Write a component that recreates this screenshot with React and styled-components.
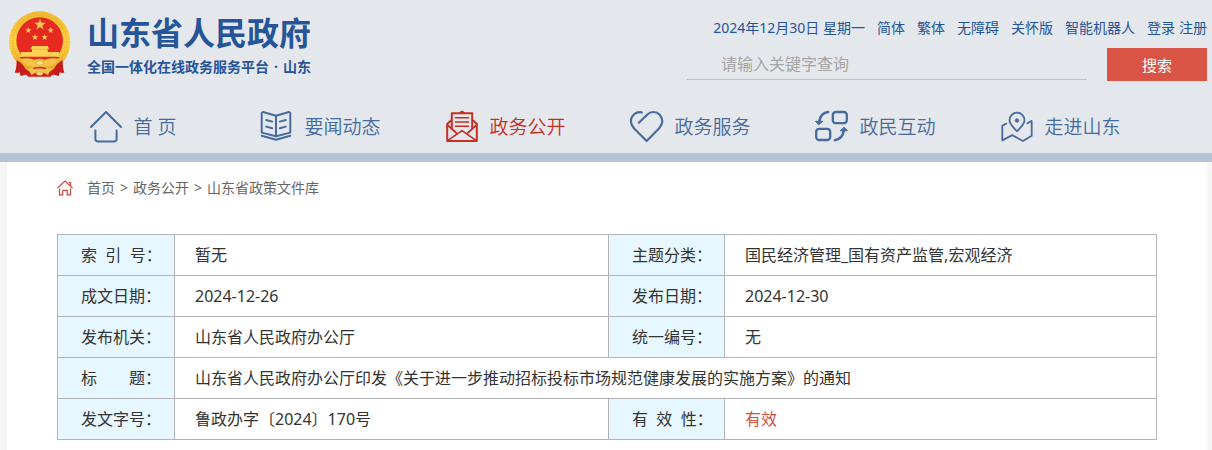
import React from 'react'
import styled, { createGlobalStyle } from 'styled-components';

const topLinks = ['简体', '繁体', '无障碍', '关怀版', '智能机器人'];

const crumbs = ['首页', '政务公开', '山东省政策文件库'];

const starPoints = (cx, cy, r) =>
  Array.from({ length: 10 }, (_, i) => {
    const radius = i % 2 ? r * 0.4 : r;
    const angle = (Math.PI / 5) * i - Math.PI / 2;
    return `${(cx + radius * Math.cos(angle)).toFixed(1)},${(cy + radius * Math.sin(angle)).toFixed(1)}`;
  }).join(' ');

const Emblem = () => (
  <svg width="63" height="67" viewBox="24 19 189 201" aria-hidden="true">
    <defs>
      <linearGradient id="gold" x1="0" y1="0" x2="0" y2="1">
        <stop offset="0" stopColor="#f0b92f" />
        <stop offset="0.5" stopColor="#fbd03f" />
        <stop offset="1" stopColor="#e9a72a" />
      </linearGradient>
    </defs>
    <path d="M52 164 Q60 192 48 206 L60 203 L62 214 Q80 204 84 216 L152 216 Q158 204 176 214 L179 203 L190 206 Q180 188 188 164 Z" fill="#cf1f1c" />
    <circle cx="119" cy="112" r="92" fill="url(#gold)" />
    <circle cx="119" cy="112" r="81" fill="none" stroke="#dd9c22" strokeWidth="6" strokeDasharray="3 5" opacity="0.45" />
    <circle cx="119" cy="108" r="70" fill="#e62a22" />
    <polygon points={starPoints(120, 60, 18)} fill="#f8cc55" />
    <polygon points={starPoints(85, 77, 10)} fill="#f8cc55" />
    <polygon points={starPoints(152, 77, 10)} fill="#f8cc55" />
    <polygon points={starPoints(105, 98, 10)} fill="#f8cc55" />
    <polygon points={starPoints(134, 98, 10)} fill="#f8cc55" />
    <path d="M97 124h46l4 8h-4v10h34v14H62v-14h34v-10h-5z" fill="#fbd255" />
    <path d="M94 134h52" stroke="#e9ae38" strokeWidth="2" />
    <path d="M58 157 H180 Q172 166 152 172 L86 172 Q66 166 58 157z" fill="#e8281f" />
    <path d="M61 162 Q92 158 104 166 Q119 158 134 166 Q146 158 177 162 Q164 182 146 184 L119 190 L92 184 Q74 182 61 162z" fill="#f5c544" />
    <path d="M106 174q13-12 26 0-4 8-13 8t-13-8z" fill="#fbe08a" stroke="#d8962a" strokeWidth="2" />
    <path d="M50 166q0 26-6 38l16-2 3 11 21-5-6-11q-8-21-28-31zM188 166q0 26 5 38l-15-2-3 11-21-5 6-11q8-21 28-31z" fill="#c81b1b" />
    <path d="M80 194q20-8 39 0 19-8 39 0-10 6-14 17-14-9-25-8-11-1-25 8-4-11-14-17z" fill="#f3c04a" />
    <path d="M100 192q19-7 38 0" stroke="#cf2a1c" strokeWidth="4" fill="none" />
    <path d="M108 206q11-6 22 0l-5 6h-12z" fill="#fbe08a" />
  </svg>
);

const NavIcon = ({ children }) => (
  <svg width="32" height="32" viewBox="0 0 32 32" fill="none" stroke="currentColor" strokeWidth="2"
    strokeLinecap="round" strokeLinejoin="round" overflow="visible" aria-hidden="true">
    {children}
  </svg>
);

const navItems = [
  {
    label: '首\u00a0页\u00a0',
    icon: (
      <NavIcon>
        <path d="M1 17 16 2l15 15" />
        <path d="M5.4 20.6v8.6a2.3 2.3 0 0 0 2.3 2.3h16.6a2.3 2.3 0 0 0 2.3-2.3v-8.6" />
      </NavIcon>
    ),
  },
  {
    label: '要闻动态',
    icon: (
      <NavIcon>
        <path d="M16 5.7 4 2.2Q1.7 1.6 1.7 3.6v19L16 26.2l14.3-3.6v-19q0-2-2.3-1.4L16 5.7V26" />
        <path d="M1.7 25.8 16 29.7l14.3-3.9" />
        <path d="m6.2 10 6 1.6m-6 5 6 1.6M25.8 10l-6 1.6m6 5-6 1.6" />
      </NavIcon>
    ),
  },
  {
    label: '政务公开',
    active: true,
    icon: (
      <NavIcon>
        <path d="M6.8 18V3.2h20.4V18M6.8 9.6 2.2 14v17h29.6V14l-4.6-4.4" />
        <path d="M15 2.8 17 1.6l2 1.2" />
        <path d="M10.5 7.7h13M10.5 12h13M10.5 16.3h13" strokeWidth="1.6" />
        <path d="m2.4 15 9 8M31.6 15l-9 8M2.6 30.6 17 20.6l14.4 10" strokeWidth="1.7" />
      </NavIcon>
    ),
  },
  {
    label: '政务服务',
    icon: (
      <NavIcon>
        <path d="M11.8 2.4C6 1 .9 5.8.9 11.2c0 3 1.2 5 3.2 7.2L16.6 31 29 18.4c2-2.2 3.3-4.2 3.3-7.2 0-5-4-9.2-8.9-9.2-2.6 0-4.6 1-6.3 2.7L8.8 12.7" strokeWidth="2.2" />
      </NavIcon>
    ),
  },
  {
    label: '政民互动',
    icon: (
      <NavIcon>
        <rect x="17.8" y="2" width="14" height="11.2" rx="3" strokeWidth="2.3" />
        <rect x="1.2" y="18.8" width="14" height="11.2" rx="3" strokeWidth="2.3" />
        <path d="M13.2 2Q5.5 3 4.2 11.5M19.8 30.2q7.6-1 9-9.4" strokeWidth="2.5" />
        <path d="M.8 11.3h6.8L4 14.6zM25.6 20.8h6.8l-3.1-3.4z" fill="currentColor" strokeWidth="1" />
      </NavIcon>
    ),
  },
  {
    label: '走进山东',
    icon: (
      <NavIcon>
        <path d="M17 21.2c-3.8-4.2-7.5-7-7.5-11a7.5 7.5 0 0 1 15 0c0 4-3.7 6.8-7.5 11z" strokeWidth="1.8" />
        <circle cx="17" cy="10.5" r="1.7" fill="currentColor" strokeWidth="1" />
        <path d="m6.2 13.6-3.9 2.2v14.6l9.9-5.3L23 31l8.7-5.3V10.8l-4.4 2.6" strokeWidth="1.8" />
      </NavIcon>
    ),
  },
];

const App = () => {
  return (
    <>
      <GlobalStyle />
      <HeaderStyle>
        <Container>
          <TopBar>
            <Brand href="#">
              <Emblem />
              <BrandText>
                <h1>山东省人民政府</h1>
                <p><span>全国一体化在线政务服务平台</span><span>·</span><span>山东</span></p>
              </BrandText>
            </Brand>
            <Tools>
              <TopLinks>
                <span>2024年12月30日 星期一</span>
                {topLinks.map((text) => <a key={text} href="#">{text}</a>)}
                <Account>
                  <a href="#">登录</a>
                  <a href="#">注册</a>
                </Account>
              </TopLinks>
              <SearchForm onSubmit={(e) => e.preventDefault()}>
                <SearchInput type="text" aria-label="请输入关键字查询" placeholder="请输入关键字查询" />
                <SearchButton type="submit">搜索</SearchButton>
              </SearchForm>
            </Tools>
          </TopBar>
          <NavStyle>
            {navItems.map(({ label, icon, active }) => (
              <NavLink key={label} href="#" $active={active}>
                {icon}
                <span>{label}</span>
              </NavLink>
            ))}
          </NavStyle>
        </Container>
      </HeaderStyle>
      <PageStyle>
        <Content>
          <Breadcrumb>
            <svg width="16" height="16" viewBox="0 0 16 16" fill="none" stroke="#c8493e" strokeWidth="1.2" aria-hidden="true">
              <path d="M.5 8 8 1l7.5 7M11.5 2.5h2V6" />
              <path d="M2.5 8.5v6.3h3.3v-4.5h4.400v4.500h3.300V8.500" />
            </svg>
            <div>
              {crumbs.map((text, i) => (
                <React.Fragment key={text}>
                  {i > 0 && <Separator>&gt;</Separator>}
                  <a href="#">{text}</a>
                </React.Fragment>
              ))}
            </div>
          </Breadcrumb>
          <InfoTable>
            <colgroup>
              <LabelCol $width={117} />
              <col />
              <LabelCol $width={116} />
              <ValueCol />
            </colgroup>
            <tbody>
              <tr>
                <LabelCell>索&nbsp;&nbsp;引&nbsp;&nbsp;号：</LabelCell>
                <ValueCell>暂无</ValueCell>
                <LabelCell>主题分类：</LabelCell>
                <ValueCell>国民经济管理_国有资产监管,宏观经济</ValueCell>
              </tr>
              <tr>
                <LabelCell>成文日期：</LabelCell>
                <ValueCell>2024-12-26</ValueCell>
                <LabelCell>发布日期：</LabelCell>
                <ValueCell>2024-12-30</ValueCell>
              </tr>
              <tr>
                <LabelCell>发布机关：</LabelCell>
                <ValueCell>山东省人民政府办公厅</ValueCell>
                <LabelCell>统一编号：</LabelCell>
                <ValueCell>无</ValueCell>
              </tr>
              <tr>
                <LabelCell>标{'\u3000\u3000'}题：</LabelCell>
                <ValueCell colSpan={3}>山东省人民政府办公厅印发《关于进一步推动招标投标市场规范健康发展的实施方案》的通知</ValueCell>
              </tr>
              <tr>
                <LabelCell>发文字号：</LabelCell>
                <ValueCell>鲁政办字〔2024〕170号</ValueCell>
                <LabelCell>有&nbsp;&nbsp;效&nbsp;&nbsp;性：</LabelCell>
                <ValueCell $valid>有效</ValueCell>
              </tr>
            </tbody>
          </InfoTable>
        </Content>
      </PageStyle>
    </>
  )
}

export default App


    const GlobalStyle = createGlobalStyle`
        * {
            box-sizing: border-box;
        }
        body {
            margin: 0;
            background: #f5f5f5;
            font-family: "Noto Sans", "Noto Sans CJK SC", sans-serif;
            font-size: 14px;
            color: #333;
        }
        a {
            color: inherit;
            text-decoration: none;
        }
    `
    const HeaderStyle = styled.header`
        padding: 0 5px 0 7px;
        background: #e4e8ed;
        border-bottom: 9px solid #b4c4d5;
        color: #265499;
    `
    const Container = styled.div`
        max-width: 1200px;
        margin: 0 auto;
    `
    const TopBar = styled.div`
        display: flex;
        justify-content: space-between;
        height: 99px;
    `
    const Brand = styled.a`
        display: flex;
        gap: 16px;
        padding: 11px 0 0 1px;
    `
    const BrandText = styled.div`
        h1 {
            margin: 0 0 2px;
            font-size: 32px;
            line-height: 44px;
            font-weight: bold;
        }
        p {
            display: flex;
            justify-content: space-between;
            margin: 0;
            font-size: 14px;
            line-height: 20px;
            font-weight: bold;
        }
    `
    const Tools = styled.div`
        padding-top: 18px;
    `
    const TopLinks = styled.div`
        display: flex;
        justify-content: flex-end;
        gap: 12px;
        line-height: 20px;
    `
    const Account = styled.div`
        display: flex;
        gap: 4px;
    `
    const SearchForm = styled.form`
        display: flex;
        gap: 20px;
        margin-top: 10px;
    `
    const SearchInput = styled.input`
        width: 400px;
        height: 32px;
        padding: 0 34px;
        border: 0;
        border-bottom: 1px solid #b4c4d5;
        background: transparent;
        font: inherit;
        font-size: 16px;
        &::placeholder {
            color: #a5a5a5;
        }
    `
    const SearchButton = styled.button`
        width: 100px;
        height: 33px;
        padding: 0;
        border: 0;
        background: #d95445;
        color: #fff;
        font: inherit;
        font-size: 15px;
        cursor: pointer;
    `
    const NavStyle = styled.nav`
        display: flex;
        height: 54px;
        padding: 0 54px 0 36px;
    `
    const NavLink = styled.a`
        display: flex;
        flex: 1;
        align-items: center;
        justify-content: center;
        gap: 12px;
        font-size: 19px;
        font-weight: 350;
        color: ${({ $active }) => ($active ? '#c62f22' : '#466b9c')};
    `
    const PageStyle = styled.main`
        padding: 0 5px 0 7px;
    `
    const Content = styled(Container)`
        min-height: calc(100vh - 162px);
        padding: 16px 50px 10px;
        background: #fff;
    `
    const Breadcrumb = styled.nav`
        display: flex;
        align-items: center;
        gap: 14px;
        margin-bottom: 36px;
        line-height: 20px;
        color: #666;
    `
    const Separator = styled.span`
        margin: 0 5px;
    `
    const InfoTable = styled.table`
        width: 100%;
        table-layout: fixed;
        border-collapse: collapse;
        font-size: 16px;
        line-height: 24px;
    `
    const LabelCol = styled.col`
        width: ${({ $width }) => $width}px;
    `
    const ValueCol = styled.col`
        width: 432px;
    `
    const LabelCell = styled.th`
        height: 41px;
        padding: 0 0 0 23px;
        border: 1px solid #b1b3b6;
        background: #e7f7ff;
        font-weight: inherit;
        text-align: left;
        white-space: nowrap;
    `
    const ValueCell = styled.td`
        padding: 0 20px;
        border: 1px solid #b1b3b6;
        color: ${({ $valid }) => ($valid ? '#d04f40' : 'inherit')};
    `
